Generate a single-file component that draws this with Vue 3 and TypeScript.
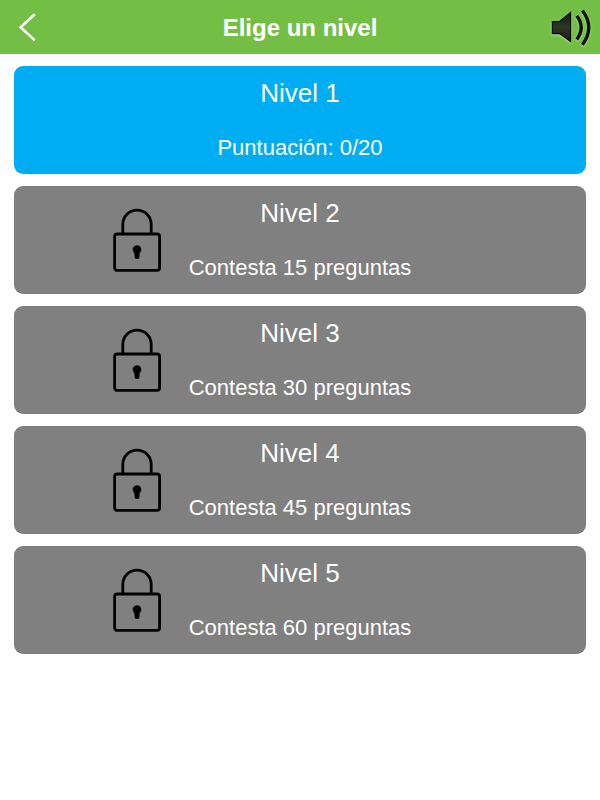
<script setup lang="ts">
import { ref } from 'vue'

interface Level {
  id: number
  detail: string
  locked: boolean
}

const levels: Level[] = [
  { id: 1, detail: 'Puntuación: 0/20', locked: false },
  { id: 2, detail: 'Contesta 15 preguntas', locked: true },
  { id: 3, detail: 'Contesta 30 preguntas', locked: true },
  { id: 4, detail: 'Contesta 45 preguntas', locked: true },
  { id: 5, detail: 'Contesta 60 preguntas', locked: true },
]

const soundOn = ref(true)
</script>

<template>
  <div class="screen">
    <header class="bar">
      <button class="icon-button" type="button" aria-label="Atrás">
        <svg width="54" height="54" viewBox="0 0 54 54" fill="none" aria-hidden="true">
          <path d="M34.8 14.2 L20.6 27.2 L34.8 40.4" stroke="#fff" stroke-width="2.6" />
        </svg>
      </button>
      <h1 class="title">Elige un nivel</h1>
      <button
        class="icon-button"
        type="button"
        aria-label="Sonido"
        :aria-pressed="soundOn"
        @click="soundOn = !soundOn"
      >
        <svg width="54" height="54" viewBox="0 0 54 54" fill="none" aria-hidden="true">
          <defs>
            <linearGradient id="speaker" x1="0" y1="0" x2="0" y2="1">
              <stop offset="0" stop-color="#151a10" />
              <stop offset="0.5" stop-color="#2c3822" />
              <stop offset="1" stop-color="#151a10" />
            </linearGradient>
          </defs>
          <g class="speaker">
            <path
              d="M6.4 21.5 H13.5 L24.6 12.6 V41.6 L13.5 33.6 H6.4 Z"
              fill="url(#speaker)"
              stroke="#080a06"
              stroke-width="1.2"
            />
            <g v-if="soundOn" stroke="#11150d" stroke-width="3.4">
              <path d="M30.8 15.8 Q39.6 27.5 30.8 39.4" />
              <path d="M36.4 10.4 Q49.2 27.5 36.4 44.8" />
            </g>
          </g>
        </svg>
      </button>
    </header>

    <main class="levels">
      <button
        v-for="level in levels"
        :key="level.id"
        type="button"
        class="level"
        :class="{ locked: level.locked }"
        :disabled="level.locked"
      >
        <span class="lock">
          <svg
            v-if="level.locked"
            width="48"
            height="64"
            viewBox="0 0 48 64"
            fill="none"
            stroke="#000"
            aria-hidden="true"
          >
            <path d="M9.8 26 V16.4 A14.2 14.2 0 0 1 38.2 16.4 V26" stroke-width="2.8" />
            <rect x="1.6" y="26" width="45" height="36.4" rx="2.6" stroke-width="2.8" />
            <circle cx="24" cy="41.6" r="4.3" fill="#000" stroke="none" />
            <path d="M24 42 V48.6" stroke-width="5" stroke-linecap="round" />
          </svg>
        </span>
        <span class="texts">
          <span class="name">Nivel {{ level.id }}</span>
          <span class="detail">{{ level.detail }}</span>
        </span>
      </button>
    </main>
  </div>
</template>

<style>
body {
  margin: 0;
  background: #fff;
}
</style>

<style scoped>
.screen {
  min-height: 100vh;
  font-family: 'Liberation Sans', Arial, sans-serif;
  color: #fff;
}

.bar {
  display: flex;
  align-items: center;
  justify-content: space-between;
  background: #73bf45;
}

.icon-button {
  display: flex;
  padding: 0;
  border: 0;
  background: none;
  cursor: pointer;
}

.speaker {
  filter: drop-shadow(0 1px 1px rgba(255, 255, 255, 0.5));
}

.title {
  margin: 0;
  padding-top: 2px;
  font-size: 24px;
  line-height: 52px;
  font-weight: 700;
}

.levels {
  display: flex;
  flex-direction: column;
  gap: 12px;
  padding: 12px 14px;
}

.level {
  display: grid;
  grid-template-columns: 1fr auto 1fr;
  min-height: 108px;
  padding: 12px 0;
  border: 0;
  border-radius: 9px;
  background: #00adf2;
  color: #fff;
  font-family: inherit;
  cursor: pointer;
}

.level.locked {
  background: #808080;
  cursor: default;
}

.lock {
  display: flex;
  align-items: center;
  justify-content: flex-end;
  padding-right: 28px;
}

.texts {
  display: flex;
  flex-direction: column;
  justify-content: space-between;
  text-align: center;
}

.name {
  font-size: 26px;
  line-height: 30px;
}

.detail {
  font-size: 22px;
  line-height: 28px;
}
</style>
